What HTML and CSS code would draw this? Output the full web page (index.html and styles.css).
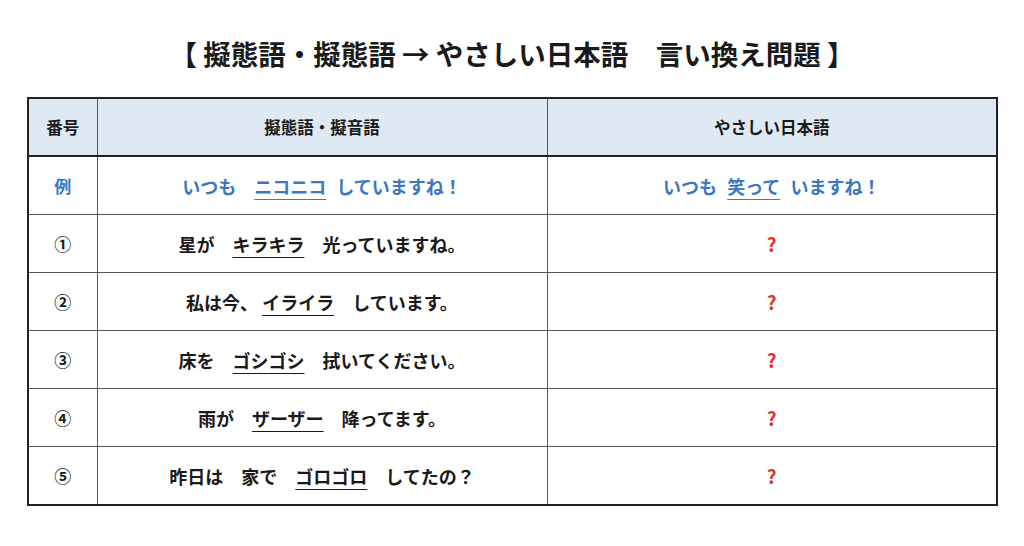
FILE: index.html
```html
<!DOCTYPE html>
<html lang="ja">
<head>
<meta charset="utf-8">
<link rel="stylesheet" href="styles.css">
</head>
<body>
<h1 class="title">【 擬態語・擬態語 → やさしい日本語　言い換え問題 】</h1>
<table class="quiz">
  <colgroup>
    <col class="c-num"><col class="c-word"><col class="c-easy">
  </colgroup>
  <thead>
    <tr><th>番号</th><th>擬態語・擬音語</th><th>やさしい日本語</th></tr>
  </thead>
  <tbody>
    <tr class="example">
      <td>例</td>
      <td>いつも　<u>ニコニコ</u> していますね！</td>
      <td>いつも <u>笑って</u> いますね！</td>
    </tr>
    <tr><td>①</td><td>星が　<u>キラキラ</u>　光っていますね。</td><td class="q">?</td></tr>
    <tr><td>②</td><td>私は今、 <u>イライラ</u>　しています。</td><td class="q">?</td></tr>
    <tr><td>③</td><td>床を　<u>ゴシゴシ</u>　拭いてください。</td><td class="q">?</td></tr>
    <tr><td>④</td><td>雨が　<u>ザーザー</u>　降ってます。</td><td class="q">?</td></tr>
    <tr><td>⑤</td><td>昨日は　家で　<u>ゴロゴロ</u>　してたの？</td><td class="q">?</td></tr>
  </tbody>
</table>
</body>
</html>
```
FILE: styles.css
```css
html, body {
  margin: 0;
  padding: 0;
  background: #ffffff;
}
body {
  font-family: "Noto Sans CJK JP", "Noto Sans", sans-serif;
  color: #1a1a1a;
  padding: 0 27px 0 27px;
}
.title {
  margin: 0 0 26px 0;
  padding-top: 36px;
  text-align: center;
  font-size: 27.5px;
  font-weight: 700;
  line-height: 35px;
}
.quiz {
  border-collapse: collapse;
  width: 969px;
  table-layout: fixed;
  border: 2px solid #222;
}
.c-num { width: 69px; }
.c-word { width: 450px; }
.c-easy { width: 450px; }
.quiz th, .quiz td {
  border: 1px solid #555;
  text-align: center;
  vertical-align: middle;
  font-weight: 700;
  padding: 0;
}
.quiz th {
  background: #dfe9f4;
  height: 56px;
  font-size: 16.5px;
  border-bottom: 2px solid #222;
}
.quiz td {
  height: 57px;
  font-size: 18px;
}
.quiz tr:last-child td {
  border-bottom: 2px solid #222;
}
.quiz td:first-child { font-size: 17px; }
.quiz u {
  text-decoration: underline;
  text-underline-offset: 5px;
  text-decoration-thickness: 1px;
}
.example td { color: #3a78c2; word-spacing: 6px; }
.q {
  color: #e0322b;
  font-size: 19px !important;
}
```
